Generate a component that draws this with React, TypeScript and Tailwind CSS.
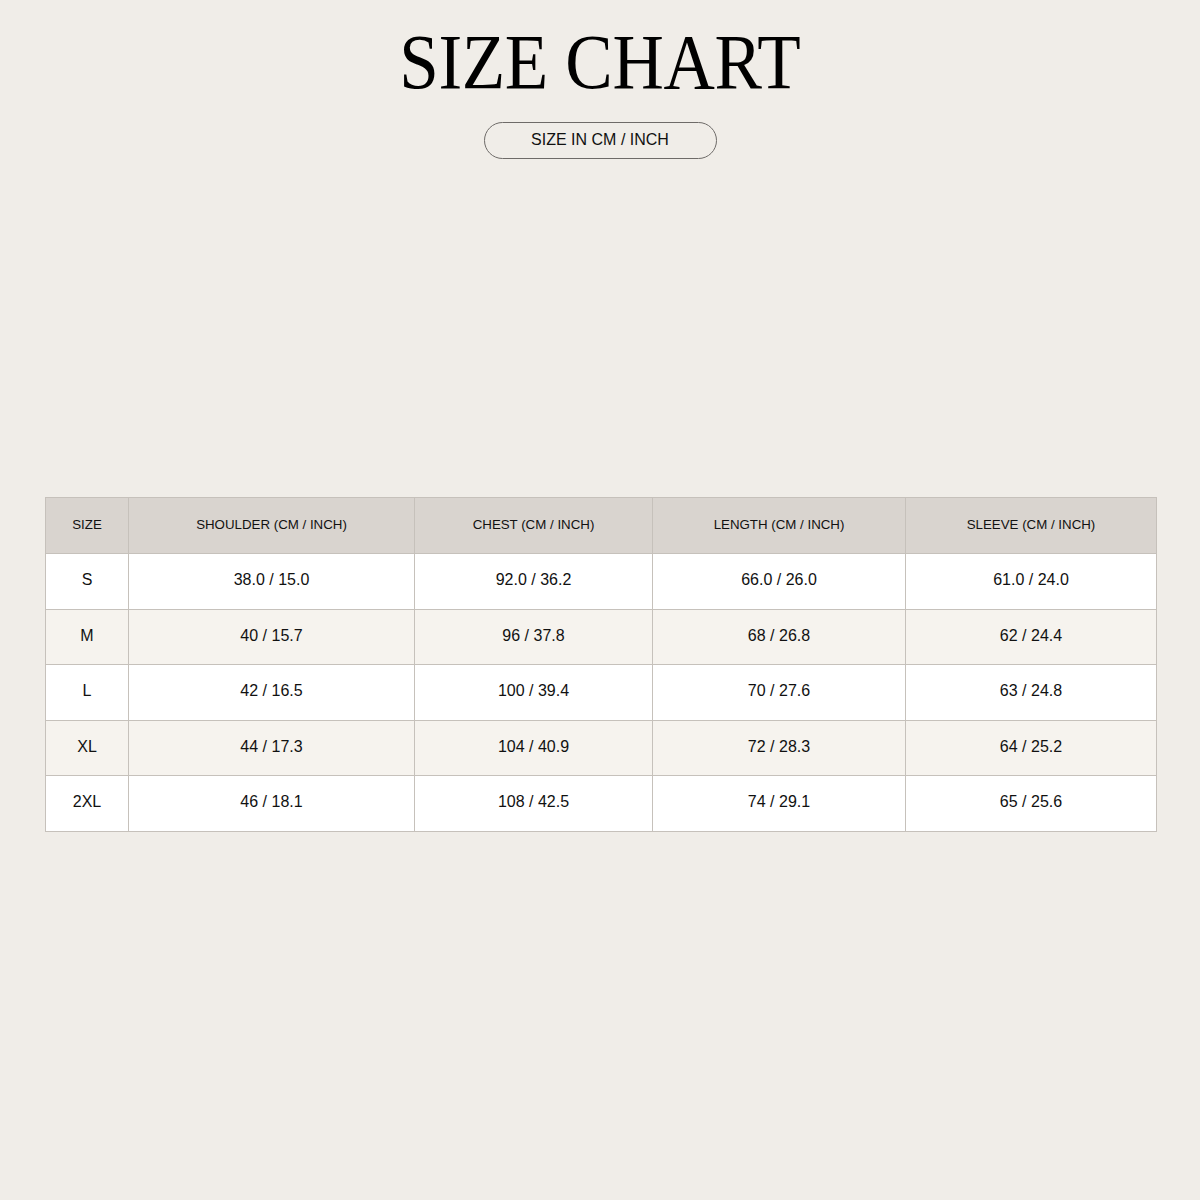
const headers = [
  "SIZE",
  "SHOULDER (CM / INCH)",
  "CHEST (CM / INCH)",
  "LENGTH (CM / INCH)",
  "SLEEVE (CM / INCH)",
];

const rows = [
  ["S", "38.0 / 15.0", "92.0 / 36.2", "66.0 / 26.0", "61.0 / 24.0"],
  ["M", "40 / 15.7", "96 / 37.8", "68 / 26.8", "62 / 24.4"],
  ["L", "42 / 16.5", "100 / 39.4", "70 / 27.6", "63 / 24.8"],
  ["XL", "44 / 17.3", "104 / 40.9", "72 / 28.3", "64 / 25.2"],
  ["2XL", "46 / 18.1", "108 / 42.5", "74 / 29.1", "65 / 25.6"],
];

const widths = ["w-[83px]", "w-[286px]", "w-[238px]", "w-[253px]", "w-[251px]"];

export default function App() {
  return (
    <div className="min-h-[1200px] w-[1200px] bg-[#f0ede8] font-['Liberation_Sans',Arial,sans-serif] text-[#111]">
      <div className="flex flex-col items-center pt-[16px]">
        <h1 className="origin-center scale-x-[0.9] font-['Liberation_Serif','DejaVu_Serif',serif] text-[79px] leading-[92px] tracking-[-0.005em] text-black">
          SIZE CHART
        </h1>
        <div className="mt-[14px] flex h-[37px] w-[233px] items-center justify-center rounded-full border border-[#6e6b68] pb-[2px] text-[16px] text-[#111]">
          SIZE IN CM / INCH
        </div>
      </div>

      <div className="mt-[338px] px-[45px]">
        <table className="w-[1111px] table-fixed border-collapse border border-[#c6c1bb]">
          <thead>
            <tr className="h-[56px] bg-[#d9d4cf]">
              {headers.map((h, i) => (
                <th
                  key={h}
                  className={`${widths[i]} border border-[#c6c1bb] pb-[2px] text-center text-[13.3px] font-normal text-[#111]`}
                >
                  {h}
                </th>
              ))}
            </tr>
          </thead>
          <tbody>
            {rows.map((row, r) => (
              <tr
                key={row[0]}
                className={`h-[55.5px] ${r % 2 === 1 ? "bg-[#f6f3ee]" : "bg-white"}`}
              >
                {row.map((cell, c) => (
                  <td
                    key={c}
                    className="border border-[#c6c1bb] pb-[2px] text-center text-[16px] text-[#111]"
                  >
                    {cell}
                  </td>
                ))}
              </tr>
            ))}
          </tbody>
        </table>
      </div>
    </div>
  );
}
